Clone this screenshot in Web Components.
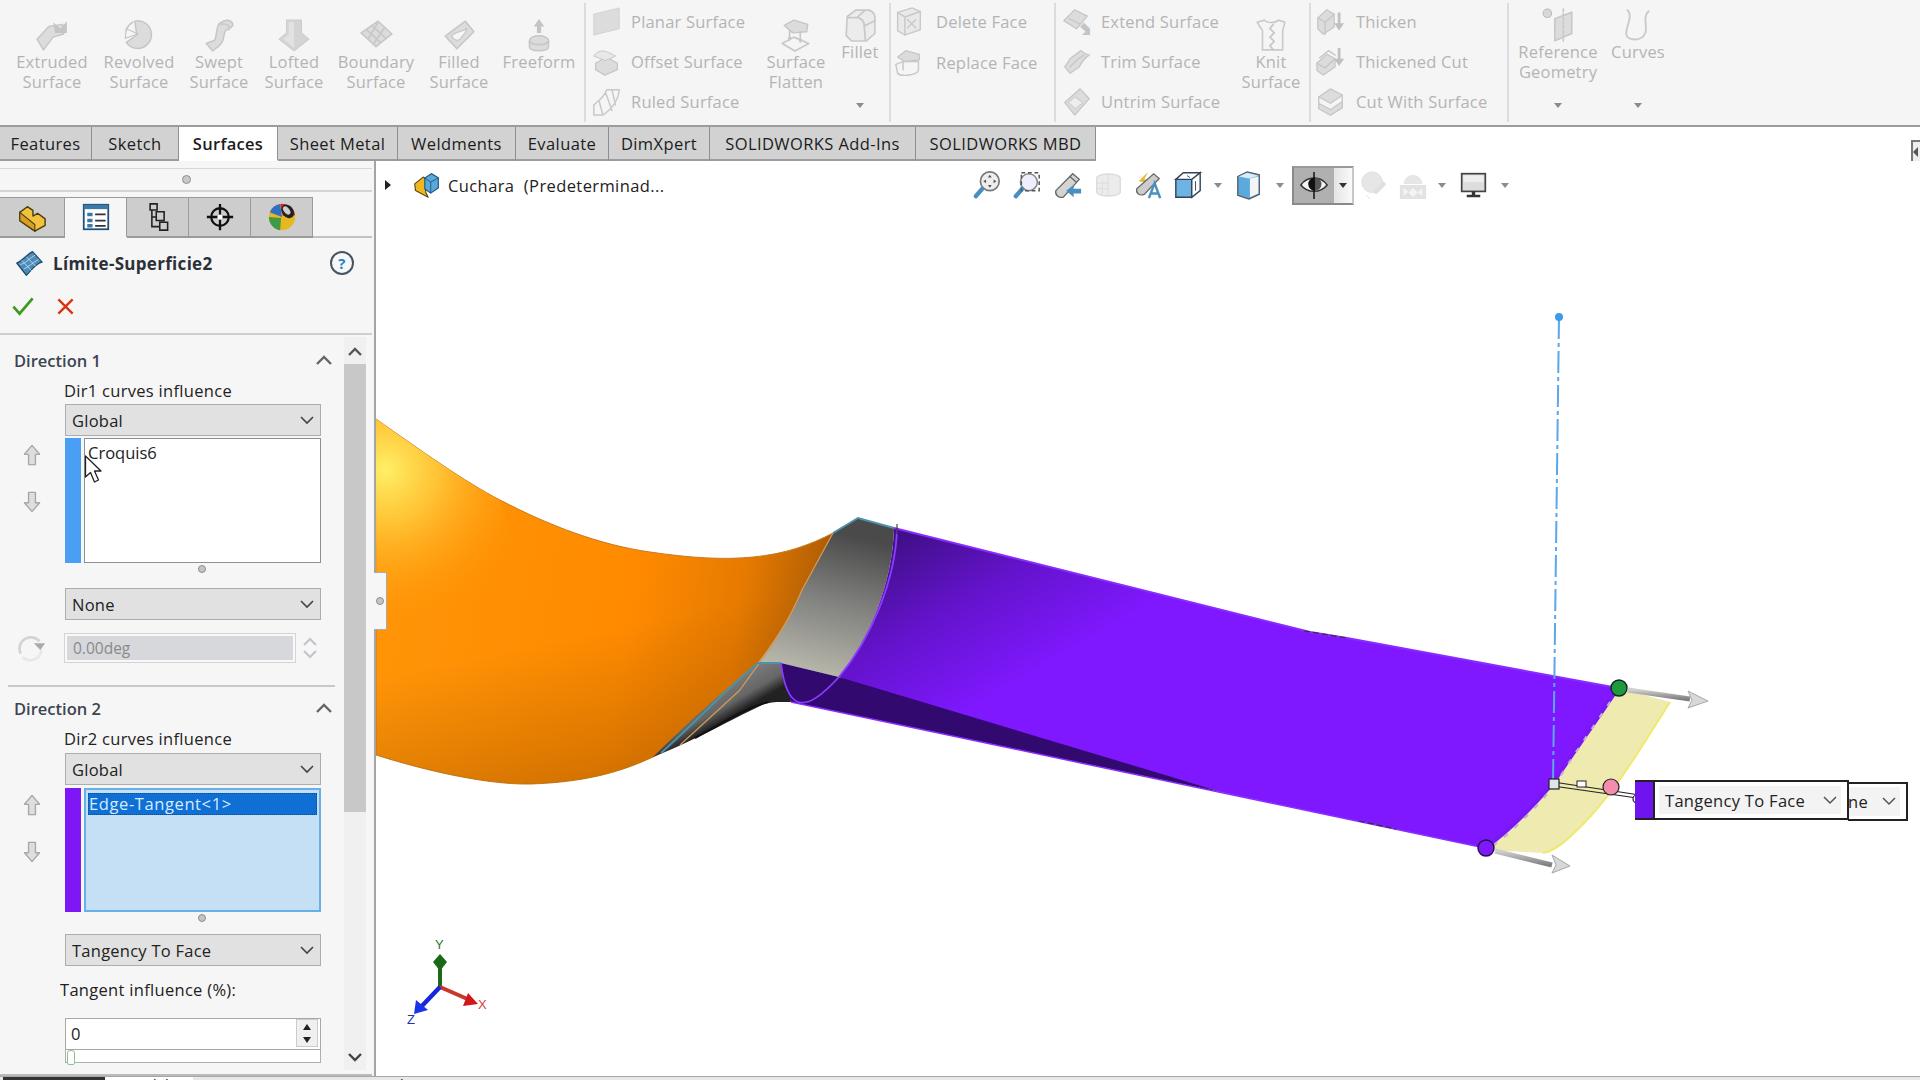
<!DOCTYPE html>
<html>
<head>
<meta charset="utf-8">
<title>SOLIDWORKS</title>
<style>
  html, body { margin: 0; height: 100%; overflow: hidden; background: #fff; }
  body { font-family: "Open Sans", "Noto Sans", sans-serif; }
</style>
</head>
<body>
<sw-app></sw-app>
<script>
// icon drawings, all on a 32 box
const g = 'fill="#dcdcdc" stroke="#c6c6c6" stroke-width="1.4" stroke-linejoin="round"';
const l = 'fill="none" stroke="#c8c8c8" stroke-width="1.6" stroke-linejoin="round" stroke-linecap="round"';
const ICONS = {
  extruded: `<path ${g} d="M2 20 L13 8 L26 6 L27 15 L17 18 L8 30 Z"/><path fill="#c4c4c4" d="M17 4 L24 10 L30 3 L30 14 L19 14 Z"/>`,
  revolved: `<path ${g} d="M12 3 A13 13 0 1 1 4 23 L14 16 Z"/><path fill="#f5f5f5" stroke="#c2c2c2" d="M4 10 L15 15 L3 19 Z"/><path ${l} d="M10 4 A13 13 0 0 0 4 12"/>`,
  swept: `<path ${g} d="M4 24 L12 21 C15 14 12 6 20 3 C25 1 29 3 29 7 L25 11 C21 10 21 16 20 20 C19 25 14 28 10 31 Z"/><path ${l} d="M18 6 C22 5 25 7 26 9"/>`,
  lofted: `<path fill="#d4d4d4" stroke="#cdcdcd" d="M9 2 H23 V14 L30 20 L16 31 L2 20 L9 14 Z"/><path fill="#e2e2e2" d="M11 4 H16 V28 L6 20 L11 15 Z"/>`,
  boundary: `<path ${g} d="M2 14 L18 3 L31 15 L16 27 Z"/><path ${l} d="M7 11 L20 23 M12 7 L25 19 M18 4 L9 19 M24 9 L14 24"/>`,
  filled: `<path ${g} d="M3 17 L22 3 L30 13 L14 29 Z"/><path fill="#f5f5f5" stroke="#c2c2c2" d="M9 17 C13 12 18 14 23 10 C23 15 19 16 17 20 C14 22 11 20 9 17 Z"/>`,
  freeform: `<path fill="#c4c4c4" d="M16 1 L21 8 H18 V14 H14 V8 H11 Z"/><path ${g} d="M7 22 C7 15 25 15 25 22 V27 C25 32 7 32 7 27 Z"/><path ${l} d="M7 22 C10 26 22 26 25 22"/>`,
  planar: `<path fill="#dcdcdc" stroke="#d0d0d0" d="M2 8 L30 1 V24 L2 31 Z"/>`,
  offset: `<path ${g} d="M4 18 L16 11 L28 18 L28 25 L14 31 L4 25 Z"/><path fill="#e8e8e8" stroke="#c2c2c2" d="M2 10 C8 2 14 3 26 10 L15 15 Z"/>`,
  ruled: `<path ${l} d="M2 20 C8 14 14 11 16 3 H30 C29 16 22 24 12 31 H2 Z M8 16 L12 31 M15 6 L22 26 M22 3 L26 20"/>`,
  flatten: `<path ${g} d="M5 7 L14 2 L27 6 L26 13 L13 14 Z"/><path ${l} d="M10 12 V19 M20 13 V21"/><path fill="#c4c4c4" d="M8 18 H12 L10 22 Z M18 20 H22 L20 24 Z"/><path ${l} d="M3 24 L14 18 L28 24 L15 31 Z"/>`,
  fillet: `<path fill="#ececec" stroke="#c8c8c8" stroke-width="1.5" d="M4 8 L12 2 H24 C29 3 31 8 30 12 V24 L22 31 H8 L3 26 Z"/><path ${l} d="M4 9 H13 L20 3 M14 9 C18 10 20 13 20 17 L30 12 M20 17 L21 30"/>`,
  delface: `<path fill="#e9e9e9" stroke="#c8c8c8" stroke-width="1.5" d="M4 6 L20 1 L29 5 V25 L12 31 L4 26 Z"/><path ${l} d="M4 6 L12 11 V31 M12 11 L29 5"/><path ${l} d="M15 14 L24 23 M24 14 L15 23"/>`,
  repface: `<path ${g} d="M4 10 L13 3 L28 7 V13 L12 15 Z"/><path ${l} d="M2 18 L10 15 H27 V24 C27 30 8 32 4 28 Z M10 15 V24"/>`,
  extend: `<path ${g} d="M2 15 L14 3 L28 10 L16 24 Z"/><path ${l} d="M8 13 L20 19"/><path fill="#c4c4c4" d="M24 17 L31 24 L31 31 L22 31 L26 27 L20 22 Z"/>`,
  trim: `<path ${g} d="M3 22 C7 17 8 13 10 12 L21 4 C24 7 27 8 30 9 C25 12 21 18 19 22 L9 29 Z"/><path ${l} d="M9 22 C13 17 18 13 24 9"/>`,
  untrim: `<path ${g} d="M3 17 L20 2 L30 13 L14 31 Z"/><path fill="#ededed" stroke="#c2c2c2" d="M7 17 L14 11 L23 17 L15 24 Z"/>`,
  knit: `<path fill="none" stroke="#cacaca" stroke-width="1.5" stroke-linejoin="round" d="M3 4 L10 2 C12 5 20 5 23 2 L29 4 L27 12 V30 H8 V12 Z"/><path ${l} d="M18 6 L15 10 L19 14 L15 18 L19 22 L15 26 L18 30"/>`,
  thicken: `<path ${g} d="M2 12 L12 3 L20 8 V22 L8 30 L2 24 Z"/><path ${l} d="M2 12 L10 17 L20 8 M10 17 V30"/><path fill="#c0c0c0" d="M24 6 H27 V18 H31 L25.500 26 L20 18 H24 Z"/>`,
  thickcut: `<path ${g} d="M1 18 L12 8 L21 13 V22 L8 31 L1 26 Z"/><path ${l} d="M4 12 L14 4 L21 9 M1 18 L10 23 L21 13"/><path fill="#c0c0c0" d="M24 1 H27 V13 H31 L25.500 21 L20 13 H24 Z"/>`,
  cutwith: `<path ${g} d="M3 11 L16 2 L29 9 L16 18 Z"/><path ${g} d="M3 18 L16 25 L29 16 V23 L16 31 L3 24 Z"/><path ${l} d="M3 11 V17 M29 9 V15"/>`,
  refgeom: `<circle cx="6" cy="5" r="4" fill="#d8d8d8" stroke="#bbb"/><path ${g} d="M13 10 L29 4 V24 L13 31 Z"/><path ${l} stroke-dasharray="2 2" d="M21 1 V31"/>`,
  curves: `<path fill="none" stroke="#cacaca" stroke-width="1.800" stroke-linecap="round" d="M6 2 C12 7 4 18 5 25 C6 31 20 32 23 23 C25 16 20 8 26 3"/>`,
  // heads-up toolbar, in colour
  zoomfit: `<circle cx="19" cy="12" r="10" fill="#eee" stroke="#777" stroke-width="1.800"/><path stroke="#4a8fc0" stroke-width="4.500" stroke-linecap="round" d="M11 20 L4 28"/><path fill="#555" d="M19 5 l2 3 h-4 Z M19 19 l-2 -3 h4 Z M12 12 l3 -2 v4 Z M26 12 l-3 -2 v4 Z"/>`,
  zoomarea: `<circle cx="18" cy="13" r="9" fill="#eef" stroke="#888" stroke-width="1.600"/><path stroke="#4a8fc0" stroke-width="4.500" stroke-linecap="round" d="M11 20 L4 28"/><rect x="10" y="3" width="19" height="19" fill="none" stroke="#555" stroke-width="1.600" stroke-dasharray="4 3"/>`,
  prevview: `<path fill="#d4d4d4" stroke="#666" stroke-width="1.400" d="M3 22 L21 4 L28 10 L11 29 C6 30 2 27 3 22 Z"/><path stroke="#666" stroke-width="1.400" d="M18 7 L25 13"/><path fill="#4a8fc0" d="M14 22 L22 16 V20 H30 V25 H22 V29 Z"/>`,
  section: `<path fill="#ececec" stroke="#dcdcdc" stroke-width="1.500" d="M4 8 C8 3 25 3 29 8 V24 C25 29 8 29 4 24 Z"/><path fill="none" stroke="#dcdcdc" d="M16 5 V27 M10 10 V26 M4 14 H16 M4 20 H16"/>`,
  dynann: `<path fill="#e8b830" d="M6 12 L16 2 L12 10 L18 10 L8 22 L12 13 Z"/><path fill="#ccc" stroke="#666" stroke-width="1.300" d="M4 20 L22 4 L28 9 L12 26 C7 28 3 25 4 20 Z"/><path fill="none" stroke="#4a8fc0" stroke-width="2.600" d="M17 30 L23 14 L29 30 M19 25 H27"/>`,
  cube: `<path fill="#6db4e4" stroke="#345" stroke-width="1.500" d="M3 10 H20 V29 H3 Z"/><path fill="#fff" stroke="#345" stroke-width="1.500" d="M3 10 L11 3 H29 L20 10 Z M20 10 L29 3 V22 L20 29 Z"/><path fill="none" stroke="#345" d="M15 6 L18 8 M24 12 V22"/>`,
  dispstyle: `<path fill="#5aaade" stroke="#555" stroke-width="1.300" d="M4 7 L14 2 L27 5 V26 L16 31 L4 27 Z"/><path fill="#f4f4f4" d="M17 9 L26 7 V25 L17 29 Z"/><path fill="#d8ecf8" d="M5 7 L14 3 L26 6 L16 9 Z"/>`,
  eye: `<path fill="#f4f4f4" stroke="#333" stroke-width="1.600" d="M2 16 C9 6 23 6 30 16 C23 25 9 25 2 16 Z"/><circle cx="17" cy="15" r="7" fill="#555"/><path fill="#111" d="M10 15 A7 7 0 0 1 17 8 V22 A7 7 0 0 1 10 15 Z"/><path stroke="#111" stroke-width="1.600" d="M16 2 V31"/>`,
  scene: `<circle cx="14" cy="13" r="11" fill="#e6e6e6" stroke="#dedede"/><path stroke="#e0e0e0" stroke-width="5" stroke-linecap="round" d="M18 23 L26 15"/><path fill="none" stroke="#dcdcdc" d="M8 27 L12 31"/>`,
  appear: `<path fill="#e6e6e6" d="M6 15 A10 10 0 0 1 26 15 Z"/><path fill="#e2e2e2" d="M2 16 H30 V31 H2 Z"/><path fill="#f4f4f4" d="M6 19 L11 23 L6 28 Z M16 19 L21 24 L16 29 L11 24 Z M26 19 V28 L21 24 Z"/>`,
  monitor: `<rect x="2" y="2" width="28" height="21" fill="#ddd" stroke="#444" stroke-width="2"/><path fill="#eee" d="M4 4 H28 V12 H4 Z"/><path fill="#333" d="M14 23 H18 V27 H24 V30 H8 V27 H14 Z"/>`,
  // property manager icons
  part: `<path fill="#f2c23e" stroke="#4a3d10" stroke-width="1.500" stroke-linejoin="round" d="M3 11 L11 5 L17 9 V15 L22 12 L30 18 V25 L19 31 L3 20 Z"/><path fill="#d8a020" stroke="#4a3d10" stroke-width="1.200" d="M3 11 L3 20 L19 31 V24 Z"/>`,
  props: `<rect x="2" y="2" width="28" height="28" fill="#fff" stroke="#1d4f7a" stroke-width="2"/><rect x="2" y="2" width="28" height="5" fill="#3a78a8"/><path fill="#3a78a8" d="M6 11 H12 V15 H6 Z M6 18 H12 V22 H6 Z M6 24 H12 V28 H6 Z"/><path stroke="#333" stroke-width="2" d="M15 13 H27 M15 20 H27 M15 26 H27"/>`,
  tree: `<path fill="none" stroke="#222" stroke-width="1.800" d="M7 1 H15 V8 H7 Z M9 8 V28 M9 16 H14 M9 27 H18 M14 10 H23 V20 H14 Z M18 22 H27 V31 H18 Z"/>`,
  target: `<circle cx="16" cy="16" r="10" fill="none" stroke="#111" stroke-width="2.600"/><path stroke="#111" stroke-width="2.600" d="M16 1 V31 M1 16 H31"/><circle cx="16" cy="16" r="3" fill="#fff"/>`,
  ball: `<circle cx="16" cy="16" r="14" fill="#e8b820"/><path fill="#3f9a44" d="M2 16 A14 14 0 0 0 14 30 L15 17 Z"/><path fill="#2f6fc8" d="M3 11 A14 14 0 0 1 14 2 L16 16 Z"/><path fill="#d83020" d="M14 2 A14 14 0 0 1 30 14 L17 15 Z"/><ellipse cx="22" cy="10" rx="6" ry="8" transform="rotate(-40 22 10)" fill="#222"/><ellipse cx="21" cy="9" rx="3" ry="5" transform="rotate(-40 21 9)" fill="#ccc"/>`,
  surf: `<path fill="#4d8db8" stroke="#1d4a6c" stroke-width="1.400" stroke-linejoin="round" d="M2 16 C9 13 14 6 20 3 L31 15 C24 16 19 24 13 30 Z"/><path fill="none" stroke="#bcdcf0" d="M8 13 L19 25 M13 9 L24 20 M6 18 C13 16 17 10 23 7 M10 23 C16 20 21 15 27 12"/>`,
  ok: `<path fill="none" stroke="#3d9a1e" stroke-width="4" d="M2 17 L11 27 L30 5"/>`,
  no: `<path fill="none" stroke="#d9320e" stroke-width="4" d="M4 4 L28 28 M28 4 L4 28"/>`,
  up: `<path fill="#dedede" stroke="#a8a8a8" stroke-width="2" stroke-linejoin="round" d="M16 2 L27 15 H21 V30 H11 V15 H5 Z"/>`,
  down: `<path fill="#dedede" stroke="#a8a8a8" stroke-width="2" stroke-linejoin="round" d="M16 30 L27 17 H21 V2 H11 V17 H5 Z"/>`,
  rotate: `<path fill="none" stroke="#d4d4d4" stroke-width="3" d="M5 22 A12 12 0 0 1 25 9"/><path fill="none" stroke="#e8e8e8" stroke-width="3" d="M27 18 A12 12 0 0 1 7 26"/><path fill="#aaa" d="M19 11 H31 L26 18 Z"/>`,
  cuchara: `<path fill="#f0b820" stroke="#5a4408" stroke-width="1.300" stroke-linejoin="round" d="M2 14 L12 6 L15 8 V24 L18 30 L3 22 Z"/><path fill="#59a9dc" stroke="#1d4f7a" stroke-width="1.300" d="M14 7 L22 2 L30 7 V19 L21 25 L14 20 Z"/><path fill="none" stroke="#1d4f7a" d="M14 7 L21 12 L30 7 M21 12 V25"/>`
};

class SwIcon extends HTMLElement {
  constructor() {
    super();
    this.attachShadow({ mode: "open" });
  }
  connectedCallback() {
    const size = this.getAttribute("size") || 32;
    const blur = this.hasAttribute("soft") ? "filter:blur(.5px);" : "";
    this.shadowRoot.innerHTML = `
      <style>
        :host { display: inline-flex; width: ${size}px; height: ${size}px; flex: none; }
        svg { width: 100%; height: 100%; ${blur} }
      </style>
      <svg viewBox="0 0 32 32">${ICONS[this.getAttribute("name")] || ""}</svg>`;
  }
}
customElements.define("sw-icon", SwIcon);

// big ribbon button, icon over one or two lines of label
class RbBig extends HTMLElement {
  constructor() {
    super();
    this.attachShadow({ mode: "open" });
  }
  connectedCallback() {
    const high = this.hasAttribute("high");
    const lines = this.getAttribute("label").split("|").map(t => `<div>${t}</div>`).join("");
    const drop = this.hasAttribute("drop") ? `<i></i>` : "";
    this.shadowRoot.innerHTML = `
      <style>
        :host { display: flex; flex-direction: column; align-items: center; flex: none; box-sizing: border-box;
                width: ${this.getAttribute("w")}px; padding-top: ${high ? 8 : 18}px; position: relative;
                font-size: 16.500px; letter-spacing: .2px; line-height: 20px; color: #b4b4b4; text-align: center; white-space: nowrap; }
        i { margin-top: auto; margin-bottom: 14px; width: 0; height: 0;
            border: 4px solid transparent; border-top: 5px solid #8a8a8a; border-bottom: 0; }
      </style>
      <sw-icon soft name="${this.getAttribute("icon")}" size="34"></sw-icon>
      ${lines}${drop}`;
  }
}
customElements.define("rb-big", RbBig);

// small ribbon button, icon then one line
class RbSmall extends HTMLElement {
  constructor() {
    super();
    this.attachShadow({ mode: "open" });
  }
  connectedCallback() {
    this.shadowRoot.innerHTML = `
      <style>
        :host { display: flex; align-items: center; height: 40.700px; font-size: 16.500px; letter-spacing: .2px; color: #b4b4b4; white-space: nowrap; }
        span { margin-left: var(--gap, 10px); }
      </style>
      <sw-icon soft name="${this.getAttribute("icon")}" size="29"></sw-icon>
      <span>${this.getAttribute("label")}</span>`;
  }
}
customElements.define("rb-small", RbSmall);

class SwRibbon extends HTMLElement {
  constructor() {
    super();
    this.attachShadow({ mode: "open" });
    this.shadowRoot.innerHTML = `
      <style>
        :host { display: flex; flex: none; height: 125px; box-sizing: content-box; background: #f5f5f5; border-bottom: 2px solid #9c9c9c; }
        .grp { display: flex; flex: none; box-sizing: border-box; border-right: 2px solid #dcdcdc; margin: 3px 0; }
        .grp > * { margin-top: -3px; }
        .col { display: flex; flex-direction: column; padding-top: 1px; }
        .last { border: 0; }
      </style>
      <div class="grp" style="width:586px;padding-left:9px">
        <rb-big w="86" icon="extruded" label="Extruded|Surface"></rb-big>
        <rb-big w="88" icon="revolved" label="Revolved|Surface"></rb-big>
        <rb-big w="72" icon="swept" label="Swept|Surface"></rb-big>
        <rb-big w="78" icon="lofted" label="Lofted|Surface"></rb-big>
        <rb-big w="86" icon="boundary" label="Boundary|Surface"></rb-big>
        <rb-big w="80" icon="filled" label="Filled|Surface"></rb-big>
        <rb-big w="80" icon="freeform" label="Freeform"></rb-big>
      </div>
      <div class="grp" style="width:305px;padding-left:6px">
        <div class="col" style="width:161px">
          <rb-small icon="planar" label="Planar Surface"></rb-small>
          <rb-small icon="offset" label="Offset Surface"></rb-small>
          <rb-small icon="ruled" label="Ruled Surface"></rb-small>
        </div>
        <rb-big w="86" icon="flatten" label="Surface|Flatten"></rb-big>
        <rb-big w="42" high drop icon="fillet" label="Fillet"></rb-big>
      </div>
      <div class="grp" style="width:165px;padding-left:3px">
        <div class="col" style="--gap:13px">
          <rb-small icon="delface" label="Delete Face"></rb-small>
          <rb-small icon="repface" label="Replace Face"></rb-small>
        </div>
      </div>
      <div class="grp" style="width:255px;padding-left:6px">
        <div class="col" style="width:171px;--gap:10px">
          <rb-small icon="extend" label="Extend Surface"></rb-small>
          <rb-small icon="trim" label="Trim Surface"></rb-small>
          <rb-small icon="untrim" label="Untrim Surface"></rb-small>
        </div>
        <rb-big w="76" icon="knit" label="Knit|Surface"></rb-big>
      </div>
      <div class="grp" style="width:198px;padding-left:5px">
        <div class="col" style="--gap:11px">
          <rb-small icon="thicken" label="Thicken"></rb-small>
          <rb-small icon="thickcut" label="Thickened Cut"></rb-small>
          <rb-small icon="cutwith" label="Cut With Surface"></rb-small>
        </div>
      </div>
      <div class="grp last" style="padding-left:1px">
        <rb-big w="96" high drop icon="refgeom" label="Reference|Geometry"></rb-big>
        <rb-big w="64" high drop icon="curves" label="Curves"></rb-big>
      </div>`;
  }
}
customElements.define("sw-ribbon", SwRibbon);

class SwTab extends HTMLElement {
  constructor() {
    super();
    this.attachShadow({ mode: "open" });
    this.shadowRoot.innerHTML = `
      <style>
        :host { display: flex; align-items: center; justify-content: center; box-sizing: border-box; flex: none; height: 34px;
                background: #d2d2d2; border-right: 1px solid #8f8f8f; border-bottom: 2px solid #9c9c9c;
                font-size: 16.500px; letter-spacing: .4px; color: #1c1c1c; white-space: nowrap; }
        :host([active]) { background: #fff; border-bottom-color: #fff; font-weight: 600; letter-spacing: .3px; }
      </style>
      <slot></slot>`;
  }
}
customElements.define("sw-tab", SwTab);

class SwTabs extends HTMLElement {
  constructor() {
    super();
    this.attachShadow({ mode: "open" });
    this.shadowRoot.innerHTML = `
      <style>
        :host { display: flex; flex: none; height: 34px; position: relative; background: #fff; }
        .pin { position: absolute; right: -4px; top: 13px; width: 9px; height: 19px; border: 2px solid #777; background: #eee; }
        .pin::before { content: ""; position: absolute; left: 0; top: 5px; border: 5px solid transparent; border-right: 5px solid #555; border-left: 0; }
      </style>
      <slot></slot><div class="pin"></div>`;
  }
}
customElements.define("sw-tabs", SwTabs);

// combo box of the property manager
class SwSelect extends HTMLElement {
  constructor() {
    super();
    this.attachShadow({ mode: "open" });
    this.shadowRoot.innerHTML = `
      <style>
        :host { display: flex; align-items: center; justify-content: space-between; box-sizing: border-box;
                height: 32px; width: 256px; margin-left: 65px; padding: 0 5px 0 6px;
                background: #e1e1e1; border: 1px solid #adadad; font-size: 16.500px; letter-spacing: .25px; color: #222; }
        svg { width: 16px; height: 10px; }
      </style>
      <slot></slot>
      <svg viewBox="0 0 16 10"><path fill="none" stroke="#444" stroke-width="1.600" d="M2 2 L8 8 L14 2"/></svg>`;
  }
}
customElements.define("sw-select", SwSelect);

// up/down arrows, colour swatch and selection list
class SwPick extends HTMLElement {
  constructor() {
    super();
    this.attachShadow({ mode: "open" });
  }
  connectedCallback() {
    const active = this.hasAttribute("active");
    this.shadowRoot.innerHTML = `
      <style>
        :host { display: flex; height: ${this.getAttribute("h")}px; margin-top: ${active ? 3 : 2}px; }
        .arrows { width: 65px; flex: none; display: flex; flex-direction: column; align-items: center; padding: 6px 0 0 0; box-sizing: border-box; gap: 25px; }
        .arrows sw-icon { margin-left: -2px; }
        .sw { width: 16px; flex: none; background: ${this.getAttribute("color")}; }
        .list { width: 237px; margin-left: 3px; box-sizing: border-box; padding: 2px 3px; font-size: 16.500px; color: #222;
                border: ${active ? "2px solid #66b0ea" : "1px solid #8f8f96"}; background: ${active ? "#c5dff5" : "#fff"}; }
        .list.active { padding: 3px 2px; }
        ::slotted(b) { display: block; font-weight: 400; letter-spacing: .6px; background: #0f6fd4; color: #d6ecff; height: 22px; line-height: 21px; padding-left: 1px; outline: 1px dotted #134a88; outline-offset: -1px; }
      </style>
      <div class="arrows"><sw-icon name="up" size="22"></sw-icon><sw-icon name="down" size="22"></sw-icon></div>
      <div class="sw"></div>
      <div class="list ${active ? "active" : ""}"><slot></slot></div>`;
  }
}
customElements.define("sw-pick", SwPick);

class SwGrip extends HTMLElement {
  constructor() {
    super();
    this.attachShadow({ mode: "open" });
    this.shadowRoot.innerHTML = `
      <style>
        :host { display: block; height: 10px; position: relative; }
        i { position: absolute; left: 198px; top: 2px; width: 6px; height: 6px; border-radius: 50%; background: #c4c4c4; border: 1.500px solid #8e8e8e; }
      </style><i></i>`;
  }
}
customElements.define("sw-grip", SwGrip);

// section header with the collapse chevron
class SwHead extends HTMLElement {
  constructor() {
    super();
    this.attachShadow({ mode: "open" });
    this.shadowRoot.innerHTML = `
      <style>
        :host { display: flex; align-items: center; justify-content: space-between; height: 42px; padding: 0 11px 0 14px;
                font-size: 16.500px; font-weight: 600; color: #3c4450; }
        svg { width: 18px; height: 10px; }
      </style>
      <slot></slot>
      <svg viewBox="0 0 18 10"><path fill="none" stroke="#666" stroke-width="2.400" d="M2 9 L9 2 L16 9"/></svg>`;
  }
}
customElements.define("sw-head", SwHead);

class SwPanel extends HTMLElement {
  constructor() {
    super();
    this.attachShadow({ mode: "open" });
    this.shadowRoot.innerHTML = `
      <style>
        :host { display: flex; flex-direction: column; flex: none; width: 376px; box-sizing: border-box; background: #f6f6f6;
                border-right: 2px solid #a4a4a4; padding-right: 2px; position: relative; }
        .grip0 { height: 21px; margin-top: 7px; flex: none; border-top: 1px solid #d8d8d8; border-bottom: 2px solid #d4d4d4; display: flex; align-items: center; justify-content: center; }
        .grip0 i { width: 7px; height: 7px; border-radius: 50%; background: #c8c8c8; border: 1.500px solid #909090; }
        .tabs { display: flex; flex: none; height: 39px; margin-top: 5px; border-bottom: 2px solid #c2c2c2; }
        .tabs div { width: 62px; box-sizing: border-box; display: flex; align-items: center; justify-content: center; margin-bottom: -2px;
                    background: #cdcdcd; border: 1px solid #9a9a9a; border-width: 1px 1px 2px 0; }
        .tabs div.on { background: #f6f6f6; border-bottom-color: #f6f6f6; border-right: 1px solid #9a9a9a; }
        .title { display: flex; align-items: center; flex: none; height: 50px; padding: 0 18px 0 15px; font-size: 17px; letter-spacing: .3px; font-weight: 700; color: #2b3038; }
        .title span { margin-left: 10px; flex: 1; }
        .help { width: 20px; height: 20px; border-radius: 50%; border: 2px solid #48555e; color: #2f7fbc; text-align: center; line-height: 20px; font-size: 15px; font-weight: 700; background: #f4f8fb; }
        .acts { display: flex; align-items: center; gap: 22px; flex: none; height: 36px; padding: 0 0 0 12px; }
        .sep { flex: none; height: 2px; background: #cfcfcf; margin-top: 9px; }
        .body { display: flex; flex: 1; min-height: 0; }
        .scroll { width: 344px; flex: none; padding-top: 4px; box-sizing: border-box; }
        .lab { font-size: 16.500px; letter-spacing: .3px; color: #222; line-height: 20px; padding-left: 64px; height: 23px; white-space: nowrap; }
        .bar { width: 22px; flex: none; margin-top: 2px; background: #f0f0f0; display: flex; flex-direction: column; align-items: center; }
        .bar svg { width: 16px; height: 10px; flex: none; }
        .thumb { width: 22px; height: 448px; background: #c8c8c8; flex: none; margin: 8px 0 0; }
        .angle { display: flex; align-items: center; margin-top: 13px; height: 30px; }
        .angle .rot { width: 64px; display: flex; justify-content: center; padding-right: 3px; box-sizing: border-box; }
        .angle .box { width: 232px; height: 30px; box-sizing: border-box; background: #d6d8dc; border: 3px solid #f8f8f8; outline: 1px solid #d4d4d4; outline-offset: -1px;
                      font-size: 15.500px; color: #8a8a8a; padding-left: 6px; line-height: 24px; }
        .spin { width: 22px; margin-left: 3px; display: flex; flex-direction: column; gap: 4px; align-items: center; }
        .spin svg { width: 14px; height: 9px; }
        .div2 { height: 2px; background: #c8c8c8; margin: 22px 9px 0 8px; }
        .num { display: flex; align-items: center; justify-content: space-between; box-sizing: border-box; margin-left: 65px; width: 256px; height: 32px;
               background: #fff; border: 1px solid #a8a8a8; font-size: 16.500px; color: #222; padding: 0 2px 2px 5px; }
        .num .ud { width: 20px; height: 26px; border: 1px solid #ccc; background: #f0f0f0; display: flex; flex-direction: column; align-items: center; justify-content: space-around; }
        .num .ud i { width: 0; height: 0; border: 4px solid transparent; }
        .slide { position: relative; margin-left: 65px; width: 256px; height: 13px; box-sizing: border-box; background: #fff; border: 1px solid #b0b0b0; border-top: 0; }
        .slide i { position: absolute; left: 1px; top: 0; width: 6px; height: 13px; border: 1.500px solid #8cc48c; background: #fff; border-radius: 3px 3px 2px 2px; }
        .foot { height: 4px; flex: none; border-bottom: 2px solid #bbb; }
        .cursor { position: absolute; left: 84px; top: 294px; width: 20px; height: 30px; }
        .flap { position: absolute; left: 374px; top: 411px; width: 13px; height: 58px; box-sizing: border-box; background: #f6f6f6; border: 1.500px solid #aaa; border-left: 0; display: flex; align-items: center; justify-content: center; z-index: 3; }
        .flap i { width: 6px; height: 6px; border-radius: 50%; background: #c4c4c4; border: 1.500px solid #8e8e8e; }
      </style>
      <div class="grip0"><i></i></div>
      <div class="tabs">
        <div style="width:65px"><sw-icon name="part" size="30"></sw-icon></div>
        <div class="on"><sw-icon name="props" size="28"></sw-icon></div>
        <div><sw-icon name="tree" size="28"></sw-icon></div>
        <div><sw-icon name="target" size="28"></sw-icon></div>
        <div><sw-icon name="ball" size="30"></sw-icon></div>
      </div>
      <div class="title"><sw-icon name="surf" size="28"></sw-icon><span>Límite-Superficie2</span><div class="help">?</div></div>
      <div class="acts"><sw-icon name="ok" size="22"></sw-icon><sw-icon name="no" size="19"></sw-icon></div>
      <div class="sep"></div>
      <div class="body">
        <div class="scroll">
          <sw-head>Direction 1</sw-head>
          <div class="lab">Dir1 curves influence</div>
          <sw-select>Global</sw-select>
          <sw-pick h="125" color="#4a9ff5">Croquis6</sw-pick>
          <sw-grip style="height:25px"></sw-grip>
          <sw-select>None</sw-select>
          <div class="angle">
            <div class="rot"><sw-icon name="rotate" size="30"></sw-icon></div>
            <div class="box">0.00deg</div>
            <div class="spin">
              <svg viewBox="0 0 14 9"><path fill="none" stroke="#c0c4c8" stroke-width="2" d="M1 8 L7 2 L13 8"/></svg>
              <svg viewBox="0 0 14 9"><path fill="none" stroke="#c0c4c8" stroke-width="2" d="M1 1 L7 7 L13 1"/></svg>
            </div>
          </div>
          <div class="div2"></div>
          <sw-head>Direction 2</sw-head>
          <div class="lab" style="height:24px">Dir2 curves influence</div>
          <sw-select>Global</sw-select>
          <sw-pick h="124" active color="#7f16f5"><b>Edge-Tangent&lt;1&gt;</b></sw-pick>
          <sw-grip style="height:22px"></sw-grip>
          <sw-select>Tangency To Face</sw-select>
          <div class="lab" style="padding:14px 0 0 60px;height:38px;box-sizing:content-box">Tangent influence (%):</div>
          <div class="num">0<div class="ud"><i style="border-bottom:6px solid #222;border-top:0"></i><i style="border-top:6px solid #222;border-bottom:0"></i></div></div>
          <div class="slide"><i></i></div>
        </div>
        <div class="bar">
          <svg viewBox="0 0 16 10" style="margin-top:9px"><path fill="none" stroke="#555" stroke-width="2.400" d="M2 9 L8 3 L14 9"/></svg>
          <div class="thumb"></div>
          <svg viewBox="0 0 16 10" style="margin-top:auto;margin-bottom:8px"><path fill="none" stroke="#444" stroke-width="2.400" d="M2 2 L8 8 L14 2"/></svg>
        </div>
      </div>
      <div class="foot"></div>
      <svg class="cursor" viewBox="0 0 20 30"><path fill="#fff" stroke="#222" stroke-width="1.300" stroke-linejoin="round" d="M1.500 1 V22 L6.500 17.500 L10.500 27 L14.500 25 L10.500 16 H17 Z"/></svg>
      <div class="flap"><i></i></div>`;
  }
}
customElements.define("sw-panel", SwPanel);

// the 3D model, axes and handles; drawn in screen pixels
const ORANGE = "M376 419 C420 450 465 482 500 500 C550 526 600 545 650 552 C690 558 725 560 753 557 C785 554 810 545 833 533 L802 590 C790 618 775 640 758 663 C725 690 700 720 676 745 L653 757 C625 770 590 782 531 784 C490 785 430 772 376 755 Z";
class SwScene extends HTMLElement {
  constructor() {
    super();
    this.attachShadow({ mode: "open" });
    this.shadowRoot.innerHTML = `
      <style>
        :host { position: absolute; left: 0; top: 0; right: 0; bottom: 0; display: block; overflow: hidden; }
        svg { width: 1544px; height: 915px; display: block; }
        text { font-family: "Liberation Sans", sans-serif; font-size: 13px; }
      </style>
      <svg viewBox="376 161 1544 915">
        <defs>
          <linearGradient id="or1" gradientUnits="userSpaceOnUse" x1="376" y1="560" x2="840" y2="640">
            <stop offset="0" stop-color="#ff9508"/><stop offset=".55" stop-color="#ff8a00"/>
            <stop offset=".78" stop-color="#e67a00"/><stop offset=".92" stop-color="#b86204"/><stop offset="1" stop-color="#8a4a08"/>
          </linearGradient>
          <linearGradient id="or2" gradientUnits="userSpaceOnUse" x1="560" y1="640" x2="590" y2="785">
            <stop offset="0" stop-color="#a85a00" stop-opacity="0"/><stop offset="1" stop-color="#a85a00" stop-opacity=".5"/>
          </linearGradient>
          <radialGradient id="or3" gradientUnits="userSpaceOnUse" cx="385" cy="470" r="150">
            <stop offset="0" stop-color="#fff068"/><stop offset=".35" stop-color="#ffd040" stop-opacity=".8"/><stop offset="1" stop-color="#ff9a08" stop-opacity="0"/>
          </radialGradient>
          <linearGradient id="gr1" gradientUnits="userSpaceOnUse" x1="850" y1="535" x2="815" y2="675">
            <stop offset="0" stop-color="#4a4a4a"/><stop offset=".45" stop-color="#7e7e7c"/><stop offset="1" stop-color="#b8b8ac"/>
          </linearGradient>
          <linearGradient id="gr2" gradientUnits="userSpaceOnUse" x1="722" y1="687" x2="737" y2="713">
            <stop offset="0" stop-color="#7a7a7a"/><stop offset=".6" stop-color="#666"/><stop offset="1" stop-color="#222"/>
          </linearGradient>
          <linearGradient id="pu1" gradientUnits="userSpaceOnUse" x1="890" y1="530" x2="990" y2="700">
            <stop offset="0" stop-color="#3c0f80"/><stop offset=".5" stop-color="#6413cc"/><stop offset="1" stop-color="#7f18ff"/>
          </linearGradient>
          <linearGradient id="ar" x1="0" y1="0" x2="0" y2="1">
            <stop offset="0" stop-color="#d0d0d0"/><stop offset="1" stop-color="#808080"/>
          </linearGradient>
        </defs>

        <!-- orange face -->
        <path fill="url(#or1)" stroke="#c87a20" d="${ORANGE}"/>
        <path fill="url(#or2)" d="${ORANGE}"/>
        <path fill="url(#or3)" d="M376 419 C420 450 465 482 500 500 L540 620 L376 640 Z"/>

        <!-- grey blend between the faces -->
        <path fill="url(#gr1)" d="M833 533 L858 518 L894 528 C893 580 870 640 839 677 L781 663 L758 663 C775 640 790 618 802 590 Z"/>
        <path fill="url(#gr2)" d="M758 663 L781 663 L791 702 C780 702 770 701 760 706 C730 720 700 738 653 757 C690 720 725 690 758 663 Z"/>
        <path fill="none" stroke="#111" stroke-width="2" d="M768 702 C745 708 725 722 695 738"/>
        <path fill="none" stroke="#d49a5a" stroke-width="1.200" d="M833 533 L802 590 C785 630 770 648 740 690 L680 745"/>
        <path fill="none" stroke="#4b93a8" stroke-width="2" d="M833 533 L858 518 L894 528"/>
        <path fill="none" stroke="#4b93a8" stroke-width="2" d="M781 663 L758 663 C725 690 700 718 661 753"/>

        <!-- yellow preview of the tangent face, under the purple -->
        <path fill="#eeeab0" d="M1618 688 L1670 702 C1640 750 1610 800 1575 832 C1560 847 1550 852 1543 853 L1485 850 C1510 830 1530 810 1553 783 C1575 750 1590 730 1618 688 Z"/>
        <path fill="none" stroke="#f0ea68" stroke-width="2" d="M1670 702 C1640 750 1610 800 1575 832 C1560 847 1550 852 1543 853"/>

        <!-- purple faces; the long top edge sags a little past the middle -->
        <path fill="url(#pu1)" d="M894 528 L1310 632 L1347 638 L1618 688 C1590 730 1575 750 1553 783 C1530 810 1510 830 1485 848 L1225 793 L875 692 L839 677 C870 640 893 580 894 528 Z"/>
        <path fill="#32096e" d="M781 663 L839 677 L1225 793 L791 702 C786 690 783 677 781 663 Z"/>
        <path fill="none" stroke="#8a2cff" stroke-width="2" d="M894 528 L1310 632 L1347 638 L1618 688"/>
        <path fill="none" stroke="#8a2cff" stroke-width="1.500" d="M791 702 L1485 848"/>
        <path fill="none" stroke="#8a3cff" stroke-width="1.800" d="M897 528 C896 580 870 640 839 677 C825 692 810 706 798 702 C788 698 783 680 781 663"/>
        <path stroke="#222" d="M897 524 V534"/>
        <path stroke="#333" stroke-width="1.200" stroke-dasharray="6 3" d="M1304 631 L1347 638 M1359 821 L1396 829"/>
        <path fill="none" stroke="#7a18f5" stroke-width="4" d="M1618 688 C1590 730 1575 750 1553 783 C1530 810 1510 830 1485 848"/>
        <path fill="none" stroke="#c8a8d8" stroke-width="2" stroke-dasharray="5 9" d="M1618 690 C1590 732 1575 752 1555 785 C1532 812 1512 832 1490 848"/>

        <!-- direction axis -->
        <path fill="none" stroke="#5ca6ea" stroke-width="2" stroke-dasharray="22 4 4 4" d="M1559 317 L1553 784"/>
        <circle cx="1559" cy="317" r="4" fill="#3d9be8"/>

        <!-- handles -->
        <path stroke="url(#ar)" stroke-width="5" d="M1628 690 L1690 699"/>
        <path fill="#d8d8d8" stroke="#a8a8a8" d="M1688 691 L1708 701 L1688 708 L1692 700 Z"/>
        <path stroke="url(#ar)" stroke-width="5" d="M1495 851 L1552 865"/>
        <path fill="#d8d8d8" stroke="#a8a8a8" d="M1552 855 L1570 866 L1552 873 L1556 865 Z"/>
        <circle cx="1619" cy="688" r="8" fill="#1f9a3a" stroke="#123" stroke-width="1.400"/>
        <circle cx="1486" cy="848" r="8" fill="#7f18ff" stroke="#241044" stroke-width="1.400"/>
        <path fill="none" stroke="#222" stroke-width="1.200" d="M1553 782 L1640 795 M1553 786 L1637 798"/>
        <rect x="1549" y="779" width="10" height="10" fill="#dde4ec" stroke="#222" stroke-width="1.200"/>
        <rect x="1577" y="781" width="9" height="6" fill="#fff" stroke="#222"/>
        <circle cx="1611" cy="787" r="8" fill="#f48cac" stroke="#222" stroke-width="1.200"/>
        <circle cx="1637" cy="799" r="4" fill="#fff" stroke="#222" stroke-width="1.200"/>

        <!-- reference triad -->
        <path stroke="#1a6a1a" stroke-width="4" d="M440 987 V958"/>
        <path fill="#1a6a1a" d="M440 954 L447 962 L440 971 L433 962 Z"/>
        <path stroke="#c83828" stroke-width="4" d="M440 987 L472 1001"/>
        <path fill="#d01818" d="M478 1004 L463 1006 L468 993 Z"/>
        <path stroke="#1828d8" stroke-width="4.500" d="M440 987 L420 1008"/>
        <path fill="#1c34e8" d="M414 1014 L416 1000 L428 1010 Z"/>
        <text x="435" y="949" fill="#2a7a2a" font-size="14">Y</text>
        <text x="478" y="1009" fill="#d84040">X</text>
        <text x="407" y="1024" fill="#2030b0">Z</text>
      </svg>`;
  }
}
customElements.define("sw-scene", SwScene);

// heads-up toolbar and tree header
class SwView extends HTMLElement {
  constructor() {
    super();
    this.attachShadow({ mode: "open" });
    const caret = `<i class="c"></i>`;
    const btn = (n, w, soft) => `<div class="b" style="width:${w}px"><sw-icon name="${n}" size="30" ${soft ? "soft" : ""}></sw-icon></div>`;
    this.shadowRoot.innerHTML = `
      <style>
        :host { display: block; flex: 1; position: relative; background: #fff; min-width: 0; }
        .head { position: relative; z-index: 2; display: flex; align-items: center; height: 48px; }
        .tri { width: 0; height: 0; margin-left: 9px; border: 5.500px solid transparent; border-left: 6.500px solid #222; border-right: 0; }
        .name { margin-left: 8px; font-size: 16.500px; letter-spacing: .4px; color: #222; white-space: pre; }
        .root { margin-left: 22px; }
        .hud { display: flex; align-items: center; margin-left: auto; margin-right: 405px; }
        .b { display: flex; justify-content: center; flex: none; }
        .c { flex: none; display: flex; justify-content: center; width: 20px; }
        .c::before { content: ""; width: 0; height: 0; border: 4px solid transparent; border-top: 5px solid #8c8c8c; border-bottom: 0; }
        .tog { display: flex; width: 62px; height: 39px; box-sizing: border-box; margin-left: 2px; border: 2px solid #8a8a8a; border-right-color: #c8c8c8; border-top-color: #9a9a9a; flex: none; }
        .tog .on { width: 40px; background: #b0b0b0; display: flex; align-items: center; justify-content: center; }
        .tog .off { flex: 1; background: linear-gradient(90deg,#e4e4e4,#fafafa); display: flex; align-items: center; justify-content: center; }
        .tog i { display: block; width: 0; height: 0; border: 4px solid transparent; border-top: 5px solid #333; border-bottom: 0; }
        .call { position: absolute; z-index: 2; display: flex; align-items: center; box-sizing: border-box; background: #fff; font-size: 16.500px; letter-spacing: .3px; color: #222; }
        .call1 { left: 1472px; top: 621px; width: 60px; height: 39px; border: 2px solid #222; border-left: 0; padding: 0; justify-content: space-between; }
        .call1 em { font-style: normal; flex: 1; background: #f3f3f3; margin: 3px 6px 3px 0; height: 29px; line-height: 28px; display: flex; justify-content: space-between; align-items: center; }
        .call2 { left: 1259px; top: 619px; width: 214px; height: 40px; border: 2px solid #222; border-left: 0; }
        .call2 .sw { width: 18px; height: 36px; background: #6f14ee; border-right: 2px solid #222; flex: none; }
        .call2 .tx { flex: 1; background: #f3f3f3; height: 28px; margin: 0 6px 0 4px; display: flex; justify-content: space-between; align-items: center; padding: 0 0 0 6px; }
        .call svg { width: 14px; height: 9px; margin-right: 4px; flex: none; }
      </style>
      <sw-scene></sw-scene>
      <div class="head">
        <i class="tri"></i>
        <sw-icon class="root" name="cuchara" size="27"></sw-icon>
        <span class="name">Cuchara  (Predeterminad...</span>
        <div class="hud">
          ${btn("zoomfit", 40)}${btn("zoomarea", 40)}${btn("prevview", 41)}${btn("section", 40, true)}${btn("dynann", 39)}${btn("cube", 41)}${caret}
          ${btn("dispstyle", 42)}${caret}
          <div class="tog"><div class="on"><sw-icon name="eye" size="30"></sw-icon></div><div class="off"><i></i></div></div>
          ${btn("scene", 40, true)}${btn("appear", 38, true)}${caret}
          <div class="b" style="width:43px"><sw-icon name="monitor" size="27"></sw-icon></div>${caret}
        </div>
      </div>
      <div class="call call1"><em>ne<svg viewBox="0 0 14 9"><path fill="none" stroke="#555" stroke-width="1.500" d="M1 1 L7 7 L13 1"/></svg></em></div>
      <div class="call call2"><div class="sw"></div><div class="tx">Tangency To Face<svg viewBox="0 0 14 9"><path fill="none" stroke="#555" stroke-width="1.500" d="M1 1 L7 7 L13 1"/></svg></div></div>`;
  }
}
customElements.define("sw-view", SwView);

class SwBottom extends HTMLElement {
  constructor() {
    super();
    this.attachShadow({ mode: "open" });
    this.shadowRoot.innerHTML = `
      <style>
        :host { display: flex; flex: none; height: 4px; overflow: hidden; background: #e8e8e8; border-top: 1px solid #a6a6a6; box-sizing: border-box; font-size: 15px; line-height: 14px; color: #222; }
        div { flex: none; padding-left: 20px; box-sizing: border-box; }
        .d { width: 102px; margin-left: 3px; background: #333; padding: 0; }
        .w { background: #fff; width: 88px; }
      </style>
      <div class="d"></div><div class="w">Model</div><div style="width:105px">3D Views</div><div style="width:260px">Motion Study 1</div>`;
  }
}
customElements.define("sw-bottom", SwBottom);

class SwApp extends HTMLElement {
  constructor() {
    super();
    this.attachShadow({ mode: "open" });
    this.shadowRoot.innerHTML = `
      <style>
        :host { display: flex; flex-direction: column; width: 1920px; height: 1080px; overflow: hidden; }
        .main { display: flex; flex: 1; min-height: 0; }
      </style>
      <sw-ribbon></sw-ribbon>
      <sw-tabs>
        <sw-tab style="width:92px">Features</sw-tab>
        <sw-tab style="width:87px">Sketch</sw-tab>
        <sw-tab style="width:99px" active>Surfaces</sw-tab>
        <sw-tab style="width:120px">Sheet Metal</sw-tab>
        <sw-tab style="width:118px">Weldments</sw-tab>
        <sw-tab style="width:93px">Evaluate</sw-tab>
        <sw-tab style="width:101px">DimXpert</sw-tab>
        <sw-tab style="width:206px">SOLIDWORKS Add-Ins</sw-tab>
        <sw-tab style="width:180px">SOLIDWORKS MBD</sw-tab>
      </sw-tabs>
      <div class="main"><sw-panel></sw-panel><sw-view></sw-view></div>
      <sw-bottom></sw-bottom>`;
  }
}
customElements.define("sw-app", SwApp);
</script>
</body>
</html>
